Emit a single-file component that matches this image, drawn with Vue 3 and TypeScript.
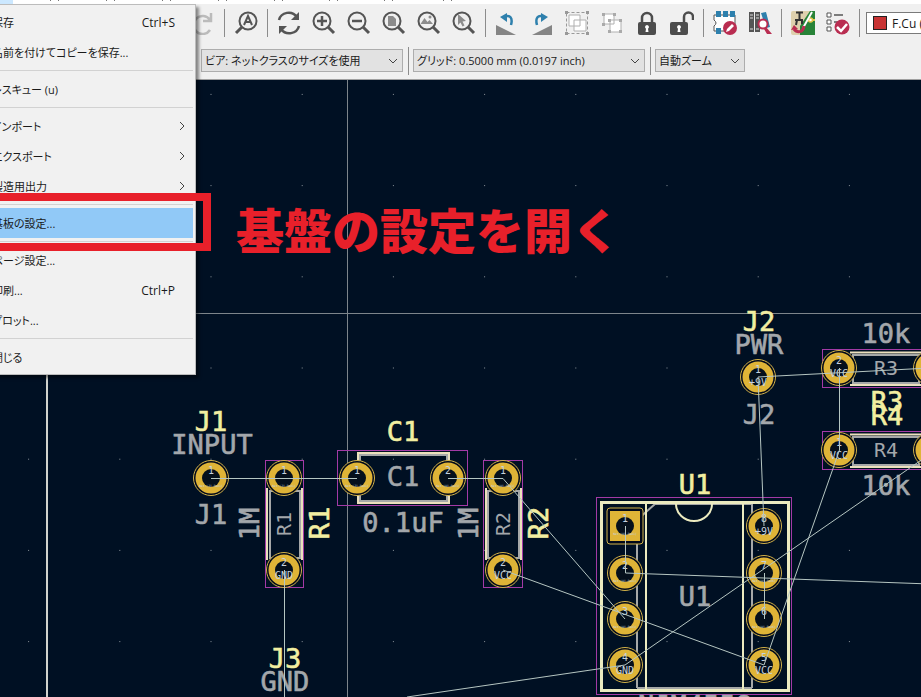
<script setup lang="ts">
interface MenuRow { label?: string; shortcut?: string; submenu?: boolean; active?: boolean }
interface Tool { name: string; icon: string }
interface Pad { x: number; y: number; num: string; net: string; square?: boolean }
interface BoardText { x: number; y: number; text: string; kind: 'silk' | 'fab'; turned?: boolean; small?: boolean }

const menuRows: MenuRow[] = [
  { label: '保存', shortcut: 'Ctrl+S' },
  { label: '名前を付けてコピーを保存...' },
  {},
  { label: 'レスキュー (u)' },
  {},
  { label: 'インポート', submenu: true },
  { label: 'エクスポート', submenu: true },
  { label: '製造用出力', submenu: true },
  {},
  { label: '基板の設定...', active: true },
  {},
  { label: 'ページ設定...' },
  { label: '印刷...', shortcut: 'Ctrl+P' },
  { label: 'プロット...' },
  {},
  { label: '閉じる' },
]

const lens = '<circle cx="14" cy="10" r="8.5" fill="none" stroke="#555" stroke-width="2"/><path d="M8 16L2 22" stroke="#555" stroke-width="3"/>'
const lensRight = '<circle cx="10" cy="10" r="8.5" fill="none" stroke="#555" stroke-width="2"/><path d="M16 16L22 22" stroke="#555" stroke-width="3"/>'
const lockBody = '<rect x="3" y="11" width="18" height="13" rx="2" fill="#4d4d4d"/><path d="M12 14a2 2 0 0 1 1 3.700L13.500 21h-3l.5-3.300A2 2 0 0 1 12 14z" fill="#fff"/>'

const toolGroups: Tool[][] = [
  [{ name: 'やり直し', icon: '<path d="M20 2v8h-8M19 9A9 9 0 1 0 19 19" fill="none" stroke="#bbb" stroke-width="2.500"/>' }],
  [{ name: '検索', icon: lens + '<path d="M10 14L14 5l4 9M11.500 11h5" fill="none" stroke="#555" stroke-width="2"/>' }],
  [
    { name: '再描画', icon: '<path d="M2 9C4 1 15-1 20 6M22 15C20 23 9 25 4 18" fill="none" stroke="#555" stroke-width="2.500"/><path d="M22 1v8h-8zM2 23v-8h8z" fill="#555"/>' },
    { name: 'ズームイン', icon: lensRight + '<path d="M5 10h10M10 5v10" stroke="#555" stroke-width="2.500"/>' },
    { name: 'ズームアウト', icon: lensRight + '<path d="M5 10h10" stroke="#555" stroke-width="2.500"/>' },
    { name: 'ページに合わせる', icon: lensRight + '<path d="M6 5h5l3 3v7H6z" fill="#8c8c8c"/>' },
    { name: 'オブジェクトに合わせる', icon: lensRight + '<path d="M3.500 13l4-6 3 4 2-2 3.500 4z" fill="#8c8c8c"/><circle cx="13" cy="6" r="1.500" fill="#8c8c8c"/>' },
    { name: '選択範囲に合わせる', icon: lensRight + '<path d="M6 3l8 7-3.500.5 2 4-2 1-2-4L6 14z" fill="#8c8c8c"/>' },
  ],
  [
    { name: '反時計回りに回転', icon: '<path d="M1 14v10h20z" fill="#858585"/><path d="M9 6C15 3 18 7 16 14" fill="none" stroke="#2e80ad" stroke-width="2.500"/><path d="M5 6l7-4v9z" fill="#2e80ad"/>' },
    { name: '時計回りに回転', icon: '<path d="M22 14v10H2z" fill="#858585"/><path d="M14 6C8 3 5 7 7 14" fill="none" stroke="#2e80ad" stroke-width="2.500"/><path d="M18 6l-7-4v9z" fill="#2e80ad"/>' },
    { name: 'グループ化', icon: '<path d="M1.500 1.500h21v21h-21z" fill="none" stroke="#999" stroke-width="1" stroke-dasharray="3 2"/><path d="M4 4h11v11H4zM9 9h12v11H9z" fill="#fff" stroke="#b0b0b0"/><path d="M0 0h3v3H0zM21 0h3v3h-3zM0 21h3v3H0zM21 21h3v3h-3z" fill="#999"/>' },
    { name: 'グループ解除', icon: '<path d="M4 3h10v10H4zM10 9h11v12H10z" fill="#fff" stroke="#b0b0b0"/><path d="M2 2h3v3H2zM13 2h3v3h-3zM2 12h3v3H2zM8 8h3v3H8zM19 8h3v3h-3zM8 19h3v3H8zM19 19h3v3h-3z" fill="#aaa"/>' },
    { name: 'ロック', icon: '<path d="M7 12V7a5 5 0 0 1 10 0v5" fill="none" stroke="#4d4d4d" stroke-width="2.500"/>' + lockBody },
    { name: 'ロック解除', icon: '<g transform="translate(-3 0)">' + lockBody + '</g><path d="M14 12V6a4.500 4.500 0 0 1 9 0v3" fill="none" stroke="#4d4d4d" stroke-width="2.500"/>' },
  ],
  [
    { name: 'フットプリントエディター', icon: '<path d="M1 4h21v16H1v-5q4-3 0-6z" fill="#fff" stroke="#555"/><path d="M3 0h5v6H3zM10 0h5v6h-5zM17 0h5v6h-5zM3 17h5v6H3z" fill="#2e80ad"/><circle cx="17" cy="17" r="7" fill="#b92d51"/><path d="M13 21l1-3 5-5 2 2-5 5z" fill="#fff"/>' },
    { name: 'ライブラリーブラウザー', icon: '<path d="M1 1h5v20H1zM7 1h5v20H7z" fill="#555"/><path d="M13 2l5-1 4 15-4 1z" fill="#2e80ad"/><path d="M2 4h3M2 7h3M8 4h3M8 7h3M2 18h3M8 18h3" stroke="#ddd"/><circle cx="15" cy="13" r="4.500" fill="#fff" stroke="#b92d51" stroke-width="2"/><path d="M18 16l6 7h-5l-3-5z" fill="#b92d51"/>' },
  ],
  [
    { name: '回路図から基板を更新', icon: '<rect x="0" y="0" width="24" height="24" rx="2" fill="#ded0ad"/><path d="M19 0h5v24H9V15z" fill="#288338"/><path d="M20 9h4" stroke="#e5c54b" stroke-width="2"/><circle cx="19.500" cy="9" r="2" fill="#fff" stroke="#e5c54b" stroke-width="1.500"/><path d="M5 1.500h7M8.500 1v7M4 9h8M6 9l-1 5M11 9v4" fill="none" stroke="#333" stroke-width="2"/><path d="M21 1L12 17" stroke="#fff" stroke-width="2"/><path d="M13 15C12 22 6 22 3 18" fill="none" stroke="#b92d51" stroke-width="3"/><path d="M0 19l3-5 4 4z" fill="#b92d51"/>' },
    { name: 'デザインルールチェック', icon: '<path d="M1 2h4v4H1zM1 9h4v4H1zM1 16h4v4H1z" fill="#fff" stroke="#555"/><path d="M8 4h9M8 11h6" stroke="#555" stroke-width="1.500"/><circle cx="16" cy="16" r="7.500" fill="#b92d51"/><path d="M11 16l4 4 6-7" fill="none" stroke="#fff" stroke-width="2.500"/>' },
  ],
]

const menubarMarks = [50, 106, 162, 218, 274, 329, 384, 443]
const dots: { x: number; y: number }[] = []
for (let row = 0; row < 7; row++) {
  for (let col = 0; col < 10; col++) {
    dots.push({ x: 28.6 + col * 91.2, y: 94.4 + row * 91.2 })
  }
}

const courtyards = [
  [265.5, 460.5, 38, 127], [483.5, 460.5, 39, 127], [337.5, 450.5, 130, 55],
  [596.5, 497.5, 195, 197], [822.5, 349.5, 140, 38], [822.5, 431.5, 140, 38],
]

const pads: Pad[] = [
  { x: 211, y: 478, num: '1', net: 'Net-(J1-Pad1)' },
  { x: 284, y: 478, num: '1', net: 'Net-(J1-Pad1)' },
  { x: 284, y: 570, num: '2', net: 'GND' },
  { x: 357, y: 478, num: '1', net: 'Net-(J1-Pad1)' },
  { x: 448, y: 478, num: '2', net: 'Net-(U1-Pad3)' },
  { x: 503, y: 478, num: '1', net: 'Net-(U1-Pad3)' },
  { x: 503, y: 570, num: '2', net: 'VCC' },
  { x: 758, y: 377, num: '1', net: '+9V' },
  { x: 839, y: 368, num: '2', net: 'VCC' },
  { x: 839, y: 450, num: '1', net: 'VCC' },
  { x: 931, y: 368, num: '1', net: '+9V' },
  { x: 931, y: 450, num: '2', net: 'GND' },
  { x: 625, y: 526, num: '1', net: 'Net-(U1-Pad1)', square: true },
  { x: 625, y: 573, num: '2', net: 'Net-(U1-Pad1)' },
  { x: 625, y: 619, num: '3', net: 'Net-(U1-Pad3)' },
  { x: 625, y: 665, num: '4', net: 'GND' },
  { x: 764, y: 526, num: '8', net: '+9V' },
  { x: 764, y: 573, num: '7', net: 'Net-(U1-Pad6)' },
  { x: 764, y: 619, num: '6', net: 'Net-(U1-Pad6)' },
  { x: 764, y: 665, num: '5', net: 'VCC' },
]

const boardTexts: BoardText[] = [
  { x: 211, y: 431, text: 'J1', kind: 'silk' },
  { x: 212, y: 454, text: 'INPUT', kind: 'fab' },
  { x: 211, y: 524, text: 'J1', kind: 'fab' },
  { x: 259, y: 524, text: '1M', kind: 'fab', turned: true },
  { x: 291, y: 524, text: 'R1', kind: 'fab', turned: true, small: true },
  { x: 329, y: 523, text: 'R1', kind: 'silk', turned: true },
  { x: 285, y: 668, text: 'J3', kind: 'silk' },
  { x: 285, y: 691, text: 'GND', kind: 'fab' },
  { x: 403, y: 441, text: 'C1', kind: 'silk' },
  { x: 403, y: 486, text: 'C1', kind: 'fab' },
  { x: 403, y: 532, text: '0.1uF', kind: 'fab' },
  { x: 478, y: 524, text: '1M', kind: 'fab', turned: true },
  { x: 510, y: 524, text: 'R2', kind: 'fab', turned: true, small: true },
  { x: 548, y: 523, text: 'R2', kind: 'silk', turned: true },
  { x: 695, y: 494, text: 'U1', kind: 'silk' },
  { x: 695, y: 606, text: 'U1', kind: 'fab' },
  { x: 759, y: 331, text: 'J2', kind: 'silk' },
  { x: 759, y: 354, text: 'PWR', kind: 'fab' },
  { x: 759, y: 424, text: 'J2', kind: 'fab' },
  { x: 886, y: 343, text: '10k', kind: 'fab' },
  { x: 886, y: 375, text: 'R3', kind: 'fab', small: true },
  { x: 887, y: 411, text: 'R3', kind: 'silk' },
  { x: 887, y: 425, text: 'R4', kind: 'silk' },
  { x: 886, y: 457, text: 'R4', kind: 'fab', small: true },
  { x: 886, y: 495, text: '10k', kind: 'fab' },
  { x: 695, y: 715, text: 'NJM4558', kind: 'fab' },
]
</script>

<template>
  <div class="app">
    <svg class="menubar" height="4" aria-hidden="true">
      <rect width="13" height="4" fill="#cce8ff" />
      <path v-for="m in menubarMarks" :key="m" :d="`M${m} 0l1 1M${m + 9} 0l-1 1`" stroke="#777" />
    </svg>

    <header class="toolbars">
      <div class="tools" role="toolbar">
        <template v-for="(group, g) in toolGroups" :key="g">
          <button v-for="tool in group" :key="tool.name" class="tool" type="button" :aria-label="tool.name">
            <svg width="24" height="24" viewBox="0 0 24 24" v-html="tool.icon" />
          </button>
          <span class="divider" />
        </template>
        <label class="layer">
          <span class="swatch" />
          <select aria-label="レイヤー"><option>F.Cu (PgUp)</option></select>
        </label>
      </div>
      <div class="options">
        <span class="combo via">
          <select aria-label="ビア"><option>ビア: ネットクラスのサイズを使用</option></select>
          <svg width="10" height="6" viewBox="0 0 10 6"><path d="M1 1l4 4 4-4" /></svg>
        </span>
        <span class="divider" />
        <span class="combo grid">
          <select aria-label="グリッド"><option>グリッド: 0.5000 mm (0.0197 inch)</option></select>
          <svg width="10" height="6" viewBox="0 0 10 6"><path d="M1 1l4 4 4-4" /></svg>
        </span>
        <span class="divider" />
        <span class="combo zoom">
          <select aria-label="ズーム"><option>自動ズーム</option></select>
          <svg width="10" height="6" viewBox="0 0 10 6"><path d="M1 1l4 4 4-4" /></svg>
        </span>
      </div>
    </header>

    <main class="canvas">
      <svg class="board" viewBox="0 80 921 617">
        <rect v-for="(d, i) in dots" :key="i" :x="d.x - 0.5" :y="d.y - 0.5" width="1" height="1" fill="#8b959c" />
        <path d="M47 80V697" stroke="#d0d2cd" stroke-width="2" />
        <path d="M347.500 80V697M0 313.500H921" stroke="#7d858b" />

        <g fill="none" stroke="#a6a8a8" stroke-width="2">
          <path d="M270 491h30v67h-30zM488 491h31v67h-31zM360 455h87v46h-87z" />
          <path d="M853 355h66v28h-66zM853 437h66v28h-66z" />
          <path d="M655 504L637 520V688M655 504h97v184M637 688h115" />
        </g>
        <g fill="none" stroke="#ebe0bd" stroke-width="2">
          <path d="M267 488v72M302 488v72M486 488v72M521 488v72M850 352.500h71M850 385h71M850 434.500h71M850 467h71" />
          <path d="M358 463v-10h91v10M358 493v10h91v-10" />
        </g>
        <g fill="none" stroke="#ecebc0">
          <rect x="601.500" y="502.500" width="187" height="188" stroke-width="3" />
          <path d="M646 504v186M743 504v186M676 504a18 17 0 0 0 36 0" stroke-width="2" />
        </g>
        <rect v-for="(c, i) in courtyards" :key="i" :x="c[0]" :y="c[1]" :width="c[2]" :height="c[3]" fill="none" stroke="#a33aa6" />

        <text
          v-for="(t, i) in boardTexts" :key="i"
          :class="['label', t.kind, { small: t.small }]"
          :transform="`translate(${t.x} ${t.y})${t.turned ? ' rotate(-90)' : ''}`"
        >{{ t.text }}</text>

        <g v-for="(p, i) in pads" :key="i" :transform="`translate(${p.x} ${p.y})`">
          <template v-if="p.square">
            <rect x="-18" y="-18" width="36" height="36" rx="3" class="clearance" />
            <rect x="-15" y="-15" width="30" height="30" class="copper" />
          </template>
          <template v-else>
            <circle r="17.500" class="clearance" />
            <circle r="15.500" class="copper" />
          </template>
          <circle r="9" class="hole" />
          <text class="pad-number" y="-4">{{ p.num }}</text>
          <text :class="p.net.length > 3 ? 'net-long' : 'net'" y="9">{{ p.net }}</text>
        </g>

        <g class="ratsnest">
          <path d="M211 478.500H357M448 478.500H503L625 619M503 570L764 665M284.500 570V697" />
          <path d="M407 697L625 665L930 454M625.500 526V573L930 584M764.500 573V619" />
          <path d="M764 665L839.500 450V368M764 526L758 377L930 368" />
        </g>
      </svg>
    </main>

    <nav class="menu">
      <template v-for="(row, i) in menuRows" :key="i">
        <button v-if="row.label" type="button" :class="['item', { active: row.active }]">
          <span class="item-label">{{ row.label }}</span>
          <span v-if="row.shortcut" class="shortcut">{{ row.shortcut }}</span>
          <svg v-if="row.submenu" class="arrow" width="6" height="10" viewBox="0 0 6 10"><path d="M1 1l4 4-4 4" /></svg>
        </button>
        <hr v-else class="rule">
      </template>
    </nav>
    <div class="highlight" />
    <p class="callout">基盤の設定を開く</p>
  </div>
</template>

<style>
body {
  margin: 0;
  background: #001023;
}
</style>

<style scoped>
.app {
  position: relative;
  display: flex;
  flex-direction: column;
  min-height: 100vh;
  overflow: hidden;
  font-family: "Open Sans", "Noto Sans CJK JP", sans-serif;
  font-size: 12px;
  font-feature-settings: "palt";
  color: #1a1a1a;
}
.menubar {
  display: block;
  width: 100%;
  background: #fff;
}
.toolbars {
  background: #f0f0f0;
  border-bottom: 1px solid #a0a0a0;
}
.tools {
  display: flex;
  align-items: center;
  height: 38px;
  padding-left: 185px;
}
.tool {
  display: flex;
  flex: none;
  align-items: center;
  justify-content: center;
  width: 35px;
  height: 36px;
  padding: 0;
  border: 0;
  background: none;
}
.divider {
  flex: none;
  width: 1px;
  height: 28px;
  margin: 0 3px 0 4px;
  background: #8c8c8c;
}
.layer {
  display: flex;
  flex: none;
  align-items: center;
  gap: 5px;
  box-sizing: border-box;
  width: 150px;
  height: 22px;
  margin-left: 3px;
  padding-left: 6px;
  border: 1px solid #7a7a7a;
  background: #fff;
}
.swatch {
  width: 12px;
  height: 12px;
  border: 1px solid #222;
  background: #c83434;
}
select {
  flex: 1;
  min-width: 0;
  height: 100%;
  padding: 0;
  border: 0;
  background: none;
  appearance: none;
  font: inherit;
  font-feature-settings: inherit;
  color: inherit;
}
.options {
  display: flex;
  align-items: center;
  height: 37px;
  padding-left: 201px;
  font-size: 11px;
}
.options .divider {
  margin: 0 4px 0 5px;
}
.combo {
  display: flex;
  align-items: center;
  box-sizing: border-box;
  height: 23px;
  padding: 0 4px 0 3px;
  border: 1px solid #adadad;
  background: #e2e2e2;
}
.combo svg,
.arrow {
  flex: none;
  fill: none;
  stroke: #444;
}
.via {
  width: 202px;
}
.grid {
  width: 232px;
}
.zoom {
  width: 90px;
}
.canvas {
  flex: 1;
  background: #001023;
}
.board {
  display: block;
  width: 100%;
}
.label {
  font-family: "DejaVu Sans Mono", monospace;
  font-size: 27px;
  text-anchor: middle;
  stroke-width: 0.6;
}
.label.small {
  font-size: 20px;
  stroke-width: 0;
}
.silk {
  fill: #f2eea1;
  stroke: #f2eea1;
}
.fab {
  fill: #a3a7ab;
  stroke: #a3a7ab;
}
.clearance {
  fill: #00081a;
  stroke: #d2b24a;
}
.copper {
  fill: #dfb437;
}
.hole {
  fill: #05101c;
}
.pad-number,
.net,
.net-long {
  font-family: "DejaVu Sans Mono", monospace;
  font-size: 10px;
  text-anchor: middle;
  fill: #c5d2de;
}
.net-long {
  font-size: 3px;
}
.ratsnest {
  fill: none;
  stroke: #b5c6c2;
  stroke-width: 1;
}
.menu {
  position: absolute;
  top: 4px;
  left: -40px;
  box-sizing: border-box;
  width: 236px;
  padding: 2px;
  border: 1px solid #bcbcbc;
  background: #f1f1f1;
  box-shadow: 3px 3px 3px rgba(0, 0, 0, 0.45);
}
.item {
  display: flex;
  align-items: center;
  box-sizing: border-box;
  width: 100%;
  height: 30px;
  padding: 0 8px 0 29px;
  border: 0;
  background: none;
  font: inherit;
  font-feature-settings: inherit;
  color: inherit;
  text-align: left;
}
.item.active {
  background: #91c9f7;
}
.item-label {
  flex: 1;
  font-size: 11px;
  white-space: nowrap;
}
.shortcut {
  margin-right: 10px;
}
.rule {
  height: 1px;
  margin: 3px 0;
  border: 0;
  background: #d2d2d2;
}
.highlight {
  position: absolute;
  top: 193px;
  left: -20px;
  box-sizing: border-box;
  width: 231px;
  height: 58px;
  border: 8px solid #e8202a;
}
.callout {
  position: absolute;
  top: 193px;
  left: 236px;
  margin: 0;
  font-family: "Noto Sans CJK JP", sans-serif;
  font-size: 48px;
  font-weight: 900;
  line-height: 70px;
  font-feature-settings: normal;
  white-space: nowrap;
  color: #e8202a;
}
</style>
